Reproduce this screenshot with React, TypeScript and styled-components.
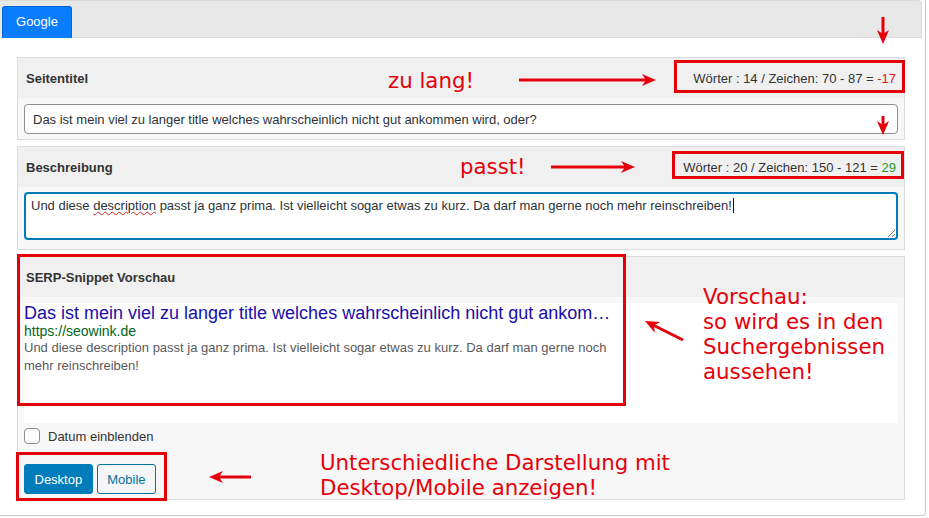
import React from 'react';
import styled, { createGlobalStyle } from 'styled-components';

const RED = '#e6000a';

const GlobalStyle = createGlobalStyle`
  html, body {
    margin: 0;
    padding: 0;
    background: #fff;
  }
  body {
    font-family: 'Liberation Sans', Arial, sans-serif;
    font-size: 13px;
    color: #333;
  }
  * {
    box-sizing: border-box;
  }
`;

function Arrow({ x1, y1, x2, y2 }: { x1: number; y1: number; x2: number; y2: number }) {
  const len = Math.hypot(x2 - x1, y2 - y1);
  const ux = (x2 - x1) / len;
  const uy = (y2 - y1) / len;
  const hl = 14;
  const hw = 6;
  const bx = x2 - ux * hl;
  const by = y2 - uy * hl;
  const pts = [
    `${x2},${y2}`,
    `${bx - uy * hw},${by + ux * hw}`,
    `${bx + ux * 4},${by + uy * 4}`,
    `${bx + uy * hw},${by - ux * hw}`,
  ].join(' ');
  return (
    <g>
      <line x1={x1} y1={y1} x2={bx + ux * 5} y2={by + uy * 5} stroke={RED} strokeWidth={3} />
      <polygon points={pts} fill={RED} />
    </g>
  );
}

function App() {
  return (
    <>
      <GlobalStyle />
      <Frame>
        <TabBar>
          <Tab>Google</Tab>
        </TabBar>
        <Content>
          <Panel>
            <PanelHeader>
              <Label>Seitentitel</Label>
              <Counter>
                Wörter : 14 / Zeichen: 70 - 87 = <Score $good={false}>-17</Score>
              </Counter>
            </PanelHeader>
            <PanelBody $pad='6px 6px 5px'>
              <TextInput>
                Das ist mein viel zu langer title welches wahrscheinlich nicht gut ankommen wird, oder?
              </TextInput>
            </PanelBody>
          </Panel>

          <Panel>
            <PanelHeader>
              <Label>Beschreibung</Label>
              <Counter>
                Wörter : 20 / Zeichen: 150 - 121 = <Score $good>29</Score>
              </Counter>
            </PanelHeader>
            <PanelBody $pad='5px 6px 9px'>
              <TextArea>
                Und diese <Misspelled>description</Misspelled> passt ja ganz prima. Ist vielleicht sogar etwas zu
                kurz. Da darf man gerne noch mehr reinschreiben!<Caret />
                <Grip width='8' height='8' viewBox='0 0 8 8'>
                  <line x1='1' y1='8' x2='8' y2='1' stroke='#777' strokeWidth='1' />
                  <line x1='5' y1='8' x2='8' y2='5' stroke='#777' strokeWidth='1' />
                </Grip>
              </TextArea>
            </PanelBody>
          </Panel>

          <Panel>
            <PanelHeader>
              <Label>SERP-Snippet Vorschau</Label>
            </PanelHeader>
            <PanelBody $pad='6px 6px 5px'>
              <Preview>
                <Snippet>
                  <SnippetTitle>
                    Das ist mein viel zu langer title welches wahrscheinlich nicht gut ankommen wird, oder?
                  </SnippetTitle>
                  <SnippetUrl>https://seowink.de</SnippetUrl>
                  <SnippetText>
                    Und diese description passt ja ganz prima. Ist vielleicht sogar etwas zu kurz. Da darf man
                    gerne noch mehr reinschreiben!
                  </SnippetText>
                </Snippet>
              </Preview>
              <CheckRow>
                <CheckBox />
                <span>Datum einblenden</span>
              </CheckRow>
              <ButtonRow>
                <Button $primary>Desktop</Button>
                <Button>Mobile</Button>
              </ButtonRow>
            </PanelBody>
          </Panel>
        </Content>

        {/* screenshot annotations */}
        <Note $x={388} $y={68}>zu lang!</Note>
        <Note $x={460} $y={154}>passt!</Note>
        <Note $x={703} $y={284}>
          Vorschau:
          <br />
          so wird es in den
          <br />
          Suchergebnissen
          <br />
          aussehen!
        </Note>
        <Note $x={320} $y={450}>
          Unterschiedliche Darstellung mit
          <br />
          Desktop/Mobile anzeigen!
        </Note>
        <Mark $x={674} $y={60} $w={231} $h={33} />
        <Mark $x={672} $y={151} $w={232} $h={28} />
        <Mark $x={17} $y={254} $w={609} $h={152} />
        <Mark $x={16} $y={452} $w={151} $h={49} />
        <Arrows width='926' height='516' viewBox='0 0 926 516'>
          <Arrow x1={519} y1={80} x2={656} y2={80} />
          <Arrow x1={551} y1={167} x2={635} y2={167} />
          <Arrow x1={883} y1={17} x2={883} y2={44} />
          <Arrow x1={883} y1={116} x2={883} y2={135} />
          <Arrow x1={683} y1={340} x2={645} y2={321} />
          <Arrow x1={251} y1={477} x2={209} y2={477} />
        </Arrows>
      </Frame>
    </>
  );
}

export default App;

const Frame = styled.div`
  position: relative;
  width: 926px;
  height: 516px;
  border-right: 1px solid #c9c9c9;
  border-bottom: 1px solid #c9c9c9;
  border-bottom-right-radius: 4px;
`;

const TabBar = styled.div`
  display: flex;
  width: 922px;
  height: 38px;
  padding: 5px 0 0 2px;
  background: #e8e8e8;
  border: 1px solid #dcdcdc;
  border-left: none;
  border-top-right-radius: 4px;
`;

const Tab = styled.div`
  width: 70px;
  height: 32px;
  display: flex;
  align-items: center;
  justify-content: center;
  padding-bottom: 2px;
  background: #0a7dff;
  border: 1px solid #0068d9;
  border-bottom: none;
  border-radius: 3px 3px 0 0;
  color: #fff;
  font-size: 13px;
`;

const Content = styled.div`
  padding: 19px 0 0 17px;
`;

const Panel = styled.section`
  width: 888px;
  margin-bottom: 6px;
  background: #f7f7f7;
  border: 1px solid #dcdcdc;
`;

const PanelHeader = styled.div`
  height: 40px;
  display: flex;
  align-items: center;
  justify-content: space-between;
  padding: 0 8px;
  background: #f0f0f0;
`;

const Label = styled.h3`
  margin: 0;
  font-size: 13px;
  font-weight: bold;
  color: #333;
`;

const Counter = styled.div`
  font-size: 13px;
  color: #333;
`;

const Score = styled.span<{ $good: boolean }>`
  color: ${(p) => (p.$good ? '#1f9a1f' : '#e0141b')};
`;

const PanelBody = styled.div<{ $pad: string }>`
  padding: ${(p) => p.$pad};
`;

const TextInput = styled.div`
  height: 30px;
  display: flex;
  align-items: center;
  padding: 0 8px;
  background: #fff;
  border: 1px solid #8c8f94;
  border-radius: 4px;
  color: #2c3338;
  font-size: 13px;
`;

const TextArea = styled.div`
  position: relative;
  height: 48px;
  padding: 4px 5px;
  background: #fff;
  border: 2px solid #007cba;
  border-radius: 4px;
  color: #2c3338;
  font-size: 13px;
  line-height: 16px;
`;

const Misspelled = styled.span`
  text-decoration: underline wavy #e02020;
  text-decoration-thickness: 1px;
  text-underline-offset: 1px;
`;

const Caret = styled.span`
  display: inline-block;
  width: 1px;
  height: 15px;
  margin-left: 1px;
  vertical-align: -3px;
  background: #111;
`;

const Grip = styled.svg`
  position: absolute;
  right: 1px;
  bottom: 1px;
`;

const Preview = styled.div`
  height: 120px;
  background: #fff;
`;

const Snippet = styled.div`
  width: 588px;
`;

const SnippetTitle = styled.div`
  font-size: 18px;
  line-height: 20px;
  color: #1a0dab;
  white-space: nowrap;
  overflow: hidden;
  text-overflow: ellipsis;
`;

const SnippetUrl = styled.div`
  font-size: 14px;
  line-height: 16px;
  color: #006621;
`;

const SnippetText = styled.div`
  font-size: 13px;
  line-height: 18px;
  color: #5a5a5a;
`;

const CheckRow = styled.label`
  display: flex;
  align-items: center;
  gap: 8px;
  margin-top: 5px;
  height: 16px;
  font-size: 13px;
  color: #333;
`;

const CheckBox = styled.span`
  width: 16px;
  height: 16px;
  background: #fff;
  border: 1px solid #8c8f94;
  border-radius: 4px;
`;

const ButtonRow = styled.div`
  display: flex;
  gap: 4px;
  margin-top: 20px;
`;

const Button = styled.button<{ $primary?: boolean }>`
  height: 30px;
  padding: 0 9.5px;
  font-family: 'Liberation Sans', Arial, sans-serif;
  font-size: 13px;
  border-radius: 3px;
  border: 1px solid ${(p) => (p.$primary ? '#007cba' : '#0071a1')};
  background: ${(p) => (p.$primary ? '#007cba' : '#f3f5f6')};
  color: ${(p) => (p.$primary ? '#fff' : '#0071a1')};
`;

const Note = styled.div<{ $x: number; $y: number }>`
  position: absolute;
  left: ${(p) => p.$x}px;
  top: ${(p) => p.$y}px;
  font-family: 'DejaVu Sans', sans-serif;
  font-size: 21.3px;
  line-height: 25px;
  color: ${RED};
  white-space: nowrap;
`;

const Mark = styled.div<{ $x: number; $y: number; $w: number; $h: number }>`
  position: absolute;
  left: ${(p) => p.$x}px;
  top: ${(p) => p.$y}px;
  width: ${(p) => p.$w}px;
  height: ${(p) => p.$h}px;
  border: 3px solid ${RED};
`;

const Arrows = styled.svg`
  position: absolute;
  left: 0;
  top: 0;
  pointer-events: none;
`;
